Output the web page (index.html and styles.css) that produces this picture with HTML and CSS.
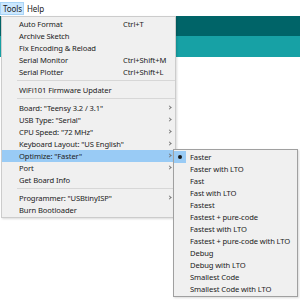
FILE: index.html
```html
<!DOCTYPE html>
<html>
<head>
    <meta charset="UTF-8">
    <title>Tools menu</title>
    <link rel="stylesheet" href="styles.css">
</head>
<body>
    <div class="menubar">
        <span class="menu-title active">Tools</span>
        <span class="menu-title">Help</span>
    </div>
    <div class="toolbar"></div>
    <div class="tabs"></div>
    <div class="editor"></div>

    <div class="dropdown">
        <div class="item"><span>Auto Format</span><span class="shortcut">Ctrl+T</span></div>
        <div class="item"><span>Archive Sketch</span></div>
        <div class="item"><span>Fix Encoding &amp; Reload</span></div>
        <div class="item"><span>Serial Monitor</span><span class="shortcut">Ctrl+Shift+M</span></div>
        <div class="item"><span>Serial Plotter</span><span class="shortcut">Ctrl+Shift+L</span></div>
        <div class="separator"></div>
        <div class="item"><span>WiFi101 Firmware Updater</span></div>
        <div class="separator"></div>
        <div class="item sub"><span>Board: "Teensy 3.2 / 3.1"</span></div>
        <div class="item sub"><span>USB Type: "Serial"</span></div>
        <div class="item sub"><span>CPU Speed: "72 MHz"</span></div>
        <div class="item sub"><span>Keyboard Layout: "US English"</span></div>
        <div class="item sub selected"><span>Optimize: "Faster"</span></div>
        <div class="item sub"><span>Port</span></div>
        <div class="item"><span>Get Board Info</span></div>
        <div class="separator"></div>
        <div class="item sub"><span>Programmer: "USBtinyISP"</span></div>
        <div class="item"><span>Burn Bootloader</span></div>
    </div>

    <div class="submenu">
        <div class="option checked"><span class="mark"></span>Faster</div>
        <div class="option"><span class="mark"></span>Faster with LTO</div>
        <div class="option"><span class="mark"></span>Fast</div>
        <div class="option"><span class="mark"></span>Fast with LTO</div>
        <div class="option"><span class="mark"></span>Fastest</div>
        <div class="option"><span class="mark"></span>Fastest + pure-code</div>
        <div class="option"><span class="mark"></span>Fastest with LTO</div>
        <div class="option"><span class="mark"></span>Fastest + pure-code with LTO</div>
        <div class="option"><span class="mark"></span>Debug</div>
        <div class="option"><span class="mark"></span>Debug with LTO</div>
        <div class="option"><span class="mark"></span>Smallest Code</div>
        <div class="option"><span class="mark"></span>Smallest Code with LTO</div>
    </div>
</body>
</html>
```

FILE: styles.css
```css
body {
    margin: 0;
    width: 300px;
    height: 300px;
    overflow: hidden;
    background: #fff;
    font-family: "Noto Sans", "Liberation Sans", sans-serif;
    font-size: 7.6px;
    letter-spacing: -0.1px;
    color: #222;
    position: relative;
}
.menubar {
    height: 16px;
    display: flex;
    align-items: center;
    padding-top: 1px;
    box-sizing: border-box;
    background: #fff;
    font-size: 8px;
}
.menu-title {
    padding: 0 2px 0 3px;
    height: 13px;
    line-height: 13px;
}
.menu-title.active {
    background: #cce8ff;
    box-shadow: inset 0 0 0 1px #a8d4f7;
}
.toolbar {
    height: 20px;
    background: #006468;
}
.tabs {
    height: 21px;
    background: #17a1a5;
}
.editor {
    height: 243px;
    background: #fff;
}

/* dropdown menu */
.dropdown {
    position: absolute;
    left: 1px;
    top: 16px;
    width: 175px;
    box-sizing: border-box;
    padding: 1px 0;
    background: #f0f0f0;
    border: 1px solid #cccccc;
    box-shadow: 1px 1px 2px rgba(0,0,0,0.15);
}
.item {
    height: 12px;
    line-height: 12px;
    display: grid;
    grid-template-columns: 104px 1fr;
    padding-left: 17px;
    position: relative;
    white-space: nowrap;
}
.item.selected {
    background: #99cbf5;
}
.item.sub::after {
    content: "";
    position: absolute;
    right: 4px;
    top: 4px;
    width: 2px;
    height: 2px;
    border-right: 1px solid #777;
    border-top: 1px solid #777;
    transform: rotate(45deg);
}
.separator {
    height: 6px;
    margin-left: 15px;
    background: linear-gradient(#d7d7d7, #d7d7d7) 0 2px / 100% 1px no-repeat;
}

/* submenu */
.submenu {
    position: absolute;
    left: 173px;
    top: 149px;
    width: 125px;
    box-sizing: border-box;
    padding: 1px 0;
    background: #f0f0f0;
    border: 1px solid #a0a0a0;
    box-shadow: 1px 1px 2px rgba(0,0,0,0.15);
}
.option {
    height: 12px;
    line-height: 12px;
    display: flex;
    align-items: center;
    white-space: nowrap;
}
.mark {
    width: 12px;
    height: 12px;
    margin-right: 4px;
    flex: none;
    display: flex;
    align-items: center;
    justify-content: center;
}
.option.checked .mark {
    background: #99cbf5;
}
.option.checked .mark::before {
    content: "";
    width: 4px;
    height: 4px;
    border-radius: 50%;
    background: #1a1a1a;
}
```
